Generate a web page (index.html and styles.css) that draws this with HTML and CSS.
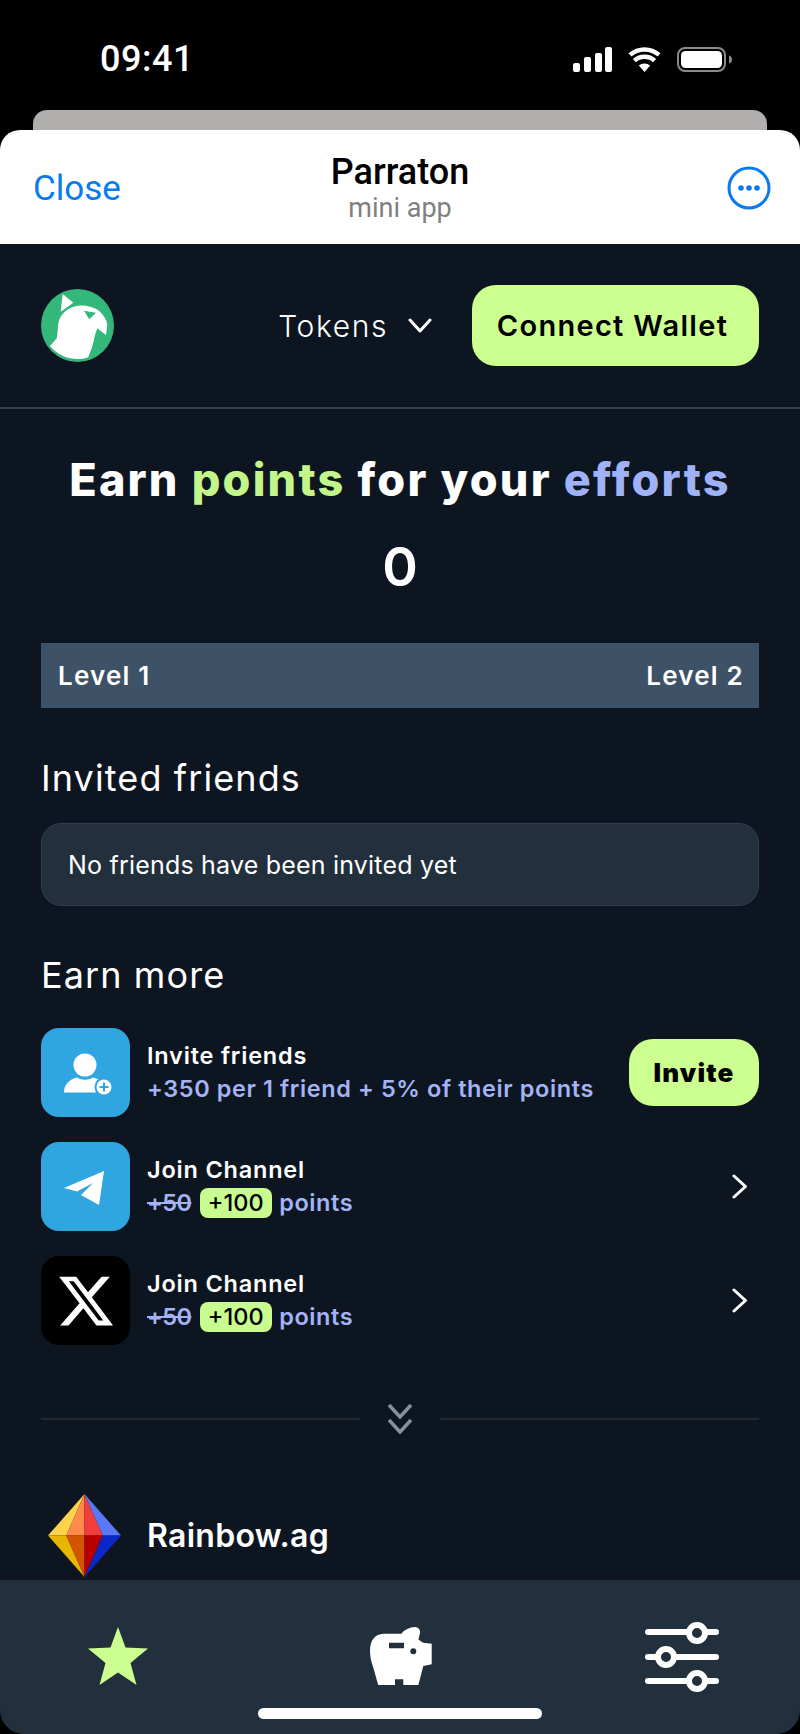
FILE: index.html
```html
<!DOCTYPE html>
<html lang="en">
<head>
  <meta charset="UTF-8">
  <meta name="viewport" content="width=device-width, initial-scale=1.0">
  <title>Parraton</title>
  <link rel="stylesheet" href="styles.css">
</head>
<body>
  <div class="phone">
    <div class="status-bar">
      <span class="time">09:41</span>
      <div class="status-icons">
        <svg class="signal" width="39" height="25" viewBox="0 0 39 25"><rect x="0" y="16" width="7" height="9" rx="2"/><rect x="11" y="10" width="7" height="15" rx="2"/><rect x="22" y="6" width="7" height="19" rx="2"/><rect x="32" y="0" width="7" height="25" rx="2"/></svg>
        <svg class="wifi" width="33" height="25" viewBox="0 0 33 25"><path d="M16.500 25L10.800 18.600a8.500 8.500 0 0 1 11.400 0z" fill="#fff"/><path d="M6.400 13.600a15 15 0 0 1 20.200 0M2 7.900a22 22 0 0 1 29 0" fill="none" stroke="#fff" stroke-width="4.500"/></svg>
        <svg class="battery" width="56" height="25" viewBox="0 0 56 25"><rect x="1" y="1" width="47" height="23" rx="7" fill="none" stroke="#8a8a8a" stroke-width="2"/><rect x="4" y="4" width="41" height="17" rx="4.500" fill="#fff"/><path d="M52 8.500c2 .5 3 2 3 4s-1 3.500-3 4z" fill="#8a8a8a"/></svg>
      </div>
    </div>
    <div class="peek"></div>

    <header class="sheet-head">
      <a class="close">Close</a>
      <div class="sheet-title">
        <strong>Parraton</strong>
        <span>mini app</span>
      </div>
      <svg class="more" width="44" height="44" viewBox="0 0 44 44"><circle cx="22" cy="22" r="20" fill="none" stroke="#0a7aee" stroke-width="3"/><circle cx="14" cy="22" r="2.800" fill="#0a7aee"/><circle cx="22" cy="22" r="2.800" fill="#0a7aee"/><circle cx="30" cy="22" r="2.800" fill="#0a7aee"/></svg>
    </header>

    <main class="app">
      <div class="topbar">
        <svg class="logo" width="73" height="73" viewBox="0 0 73 73">
          <circle cx="36.500" cy="36.500" r="36.500" fill="#34b77a"/>
          <path d="M21.700 5L19.700 22.700L32.300 13.700Z" fill="#fff"/>
          <path d="M22.300 24.300C28 18 38 15.500 45.700 17C52 18 56 20 59 22.700C63 27 66 31 66.300 36L65 46L56.300 39.300L54 46C53 51 52 55 50.700 59.300L47.300 68.300C41 70.500 35 70.500 29 69.300C21 67.500 14 63 9 57L15.700 49.300C17 44 16.500 39 17.300 34.300C18 30 20 27 22.300 24.300Z" fill="#fff"/>
          <path d="M43 21.700L55 23.700L48.300 30.300Z" fill="#34b77a"/>
        </svg>
        <div class="topbar-right">
          <div class="tokens">
            <span>Tokens</span>
            <svg width="24" height="15" viewBox="0 0 24 15"><path d="M2 2L12 13L22 2" fill="none" stroke="#fff" stroke-width="3" stroke-linecap="round" stroke-linejoin="round"/></svg>
          </div>
          <button class="connect">Connect Wallet</button>
        </div>
      </div>

      <div class="content">
        <h1 class="headline">Earn <span class="green">points</span> for your <span class="violet">efforts</span></h1>
        <div class="score">0</div>
        <div class="level-bar">
          <span>Level 1</span>
          <span>Level 2</span>
        </div>

        <h2 class="section-title friends-title">Invited friends</h2>
        <div class="empty-card">No friends have been invited yet</div>

        <h2 class="section-title earn-title">Earn more</h2>
        <ul class="tasks">
          <li class="task">
            <div class="task-icon blue">
              <svg width="89" height="89" viewBox="0 0 89 89">
                <circle cx="44" cy="37" r="11.500" fill="#fff"/>
                <path d="M23 64.500C23 56 29 51 36 49.500C41 52.500 47 52.500 52 49.500C57 50.500 61 53 63 57L55 64.500Z" fill="#fff"/>
                <circle cx="63" cy="59" r="9.500" fill="#2fa6e0"/>
                <circle cx="63" cy="59" r="7.500" fill="#fff"/>
                <path d="M63 54.500V63.500M58.500 59H67.500" stroke="#2fa6e0" stroke-width="2"/>
              </svg>
            </div>
            <div class="task-text">
              <div class="task-title">Invite friends</div>
              <div class="task-sub">+350 per 1 friend + 5% of their points</div>
            </div>
            <button class="invite">Invite</button>
          </li>
          <li class="task">
            <div class="task-icon blue">
              <svg width="89" height="89" viewBox="0 0 89 89"><path d="M23 46L63 29L58 63L40 53L52 41L36 49.500Z" fill="#fff"/></svg>
            </div>
            <div class="task-text">
              <div class="task-title">Join Channel</div>
              <div class="task-sub"><s>+50</s> <span class="badge">+100</span> points</div>
            </div>
            <svg class="arrow" width="16" height="25" viewBox="0 0 16 25"><path d="M2 2L13.500 12.500L2 23" fill="none" stroke="#fff" stroke-width="3" stroke-linecap="round" stroke-linejoin="round"/></svg>
          </li>
          <li class="task">
            <div class="task-icon black">
              <svg width="60" height="60" viewBox="0 0 24 24"><path fill="#fff" d="M18.244 2.250h3.308l-7.227 8.260 8.502 11.240H16.170l-5.214-6.817L4.990 21.750H1.680l7.730-8.835L1.254 2.250H8.080l4.713 6.231zm-1.161 17.520h1.833L7.084 4.126H5.117z"/></svg>
            </div>
            <div class="task-text">
              <div class="task-title">Join Channel</div>
              <div class="task-sub"><s>+50</s> <span class="badge">+100</span> points</div>
            </div>
            <svg class="arrow" width="16" height="25" viewBox="0 0 16 25"><path d="M2 2L13.500 12.500L2 23" fill="none" stroke="#fff" stroke-width="3" stroke-linecap="round" stroke-linejoin="round"/></svg>
          </li>
        </ul>

        <div class="more-divider">
          <svg width="26" height="31" viewBox="0 0 26 31"><path d="M2 2L13 14L24 2M2 17L13 29L24 17" fill="none" stroke="#8a9099" stroke-width="3.500"/></svg>
        </div>

        <div class="partner">
          <svg width="73" height="83" viewBox="0 0 73 83">
            <path d="M36.500 0L0 41.500H18.300Z" fill="#ffd24d"/>
            <path d="M36.500 0L18.300 41.500H36.500Z" fill="#ff8a4a"/>
            <path d="M36.500 0V41.500H54.800Z" fill="#f23d3d"/>
            <path d="M36.500 0L54.800 41.500H73Z" fill="#5a78f5"/>
            <path d="M36.500 83L0 41.500H18.300Z" fill="#e8b500"/>
            <path d="M36.500 83L18.300 41.500H36.500Z" fill="#d45500"/>
            <path d="M36.500 83V41.500H54.800Z" fill="#b80000"/>
            <path d="M36.500 83L54.800 41.500H73Z" fill="#0a28c8"/>
          </svg>
          <span>Rainbow.ag</span>
        </div>
      </div>
    </main>

    <nav class="tabbar">
      <div class="tabs">
        <svg width="62" height="58" viewBox="0 0 62 58"><path d="M31 0L38.500 20.500L61 21.500L43.500 36L49.500 58L31 45.500L12.500 58L18.500 36L1 21.500L23.500 20.500Z" fill="#ccff90"/></svg>
        <svg class="pig" width="62" height="58" viewBox="30 26 62 58"><path fill-rule="evenodd" fill="#fff" d="M30 50C30 39 35 33 43.500 32.700H61.500C64 29 70 26 75 26C79 26.500 80.500 29 80 32C79.500 35 79 36.500 78.300 38.300C80 39.500 81.500 41 83.300 41.700L91.700 42.700V63.300L83.300 65L78.300 84.300H63.300V78.300H55V84.300H38.300L33.300 66.700C31 60 30 55 30 50ZM49 41.700V47.300H64V41.700ZM73.300 47.300A3 3 0 1 0 73.300 53.300A3 3 0 1 0 73.300 47.300Z"/></svg>
        <svg class="sliders" width="74" height="70" viewBox="0 0 74 70">
          <g fill="none" stroke="#fff" stroke-width="6" stroke-linecap="round">
            <path d="M3 10H71M3 35H71M3 59H71"/>
          </g>
          <g fill="#222f3d" stroke="#fff" stroke-width="6">
            <circle cx="52" cy="11" r="8"/>
            <circle cx="21" cy="35" r="8"/>
            <circle cx="52" cy="59" r="8"/>
          </g>
        </svg>
      </div>
      <div class="home-bar"></div>
    </nav>
  </div>
</body>
</html>
```

FILE: styles.css
```css
* {
  box-sizing: border-box;
}
body {
  margin: 0;
  background-color: #000;
  font-family: Inter, "Liberation Sans", sans-serif;
  color: #fff;
}
.phone {
  width: 800px;
  height: 1734px;
  display: flex;
  flex-direction: column;
  overflow: hidden;
  background-color: #000;
}
.status-bar {
  height: 110px;
  padding: 47px 67px 0 100px;
  display: flex;
  justify-content: space-between;
  align-items: flex-start;
  flex: none;
}
.time {
  font-family: Roboto, "Liberation Sans", sans-serif;
  font-size: 36px;
  font-weight: 500;
  line-height: 25px;
  letter-spacing: 0.5px;
}
.status-icons {
  display: flex;
  align-items: center;
  gap: 16px;
}
.signal {
  fill: #fff;
}
.peek {
  height: 20px;
  margin: 0 33px;
  background-color: #b0afad;
  border-radius: 14px 14px 0 0;
  flex: none;
}
.sheet-head {
  height: 114px;
  padding: 0 29px 0 33px;
  background-color: #fff;
  border-radius: 20px 20px 0 0;
  display: flex;
  align-items: center;
  justify-content: space-between;
  position: relative;
  flex: none;
}
.close {
  font-family: Roboto, "Liberation Sans", sans-serif;
  font-size: 35px;
  color: #0a7aee;
  margin-top: 2px;
}
.sheet-title {
  position: absolute;
  left: 0;
  right: 0;
  top: 21px;
  text-align: center;
  font-family: Roboto, "Liberation Sans", sans-serif;
}
.sheet-title strong {
  display: block;
  font-size: 36px;
  line-height: 42px;
  font-weight: 500;
  color: #000;
}
.sheet-title span {
  display: block;
  font-size: 27px;
  line-height: 30px;
  color: #808080;
}
.more {
  margin-top: 2px;
}
.app {
  flex: 1;
  min-height: 0;
  overflow: hidden;
  background-color: #0d1620;
}
.topbar {
  height: 165px;
  padding: 41px 41px 0;
  border-bottom: 2px solid #383d46;
  display: flex;
  justify-content: space-between;
  align-items: flex-start;
}
.logo {
  margin-top: 4px;
}
.topbar-right {
  display: flex;
  align-items: center;
}
.tokens {
  display: flex;
  align-items: center;
  gap: 20px;
  margin-right: 40px;
  font-size: 30px;
  font-weight: 300;
  letter-spacing: 1.6px;
}
.connect {
  width: 287px;
  height: 81px;
  padding: 0 6px 0 0;
  border: 0;
  border-radius: 24px;
  background-color: #ccff90;
  color: #000;
  font-family: inherit;
  font-size: 29px;
  font-weight: 600;
  letter-spacing: 1.3px;
}
.content {
  padding: 0 41px;
}
.headline {
  margin: 43px 0 0;
  text-align: center;
  font-size: 45px;
  line-height: 56px;
  font-weight: 800;
  letter-spacing: 2.2px;
  white-space: nowrap;
}
.green {
  color: #c3f58a;
}
.violet {
  color: #9fb2f7;
}
.score {
  margin-top: 26px;
  text-align: center;
  font-size: 54px;
  line-height: 66px;
  font-weight: 600;
}
.level-bar {
  margin-top: 43px;
  height: 65px;
  padding: 0 15px 0 17px;
  background-color: #3d5266;
  display: flex;
  justify-content: space-between;
  align-items: center;
  font-size: 26px;
  font-weight: 600;
  letter-spacing: 1.2px;
}
.section-title {
  margin: 0;
  font-size: 36px;
  line-height: 42px;
  font-weight: 400;
  letter-spacing: 1.1px;
}
.friends-title {
  margin-top: 49px;
}
.empty-card {
  margin-top: 24px;
  height: 83px;
  padding: 0 26px;
  background-color: #222f3d;
  border: 1px solid #343c46;
  border-radius: 20px;
  display: flex;
  align-items: center;
  font-size: 25px;
  letter-spacing: 0.2px;
}
.earn-title {
  margin-top: 48px;
}
.tasks {
  list-style: none;
  margin: 32px 0 0;
  padding: 0;
  display: flex;
  flex-direction: column;
  gap: 25px;
}
.task {
  height: 89px;
  display: flex;
  align-items: center;
}
.task-icon {
  width: 89px;
  height: 89px;
  border-radius: 18px;
  display: flex;
  align-items: center;
  justify-content: center;
  flex: none;
}
.blue {
  background-color: #2fa6e0;
}
.black {
  background-color: #000;
}
.task-text {
  margin-left: 17px;
  flex: 1;
  min-width: 0;
}
.task-title {
  font-size: 23.5px;
  line-height: 32px;
  font-weight: 600;
  letter-spacing: 0.8px;
}
.task-sub {
  font-size: 23.5px;
  line-height: 33px;
  font-weight: 600;
  letter-spacing: 0.6px;
  color: #a3b3f5;
  white-space: nowrap;
}
.task-sub s {
  letter-spacing: -0.6px;
  margin-right: 2px;
}
.badge {
  display: inline-block;
  padding: 0 8px;
  margin-right: 1px;
  line-height: 30px;
  border-radius: 8px;
  background-color: #c8fc8e;
  color: #000;
  font-weight: 500;
  letter-spacing: 0;
}
.invite {
  width: 130px;
  height: 67px;
  border: 0;
  border-radius: 24px;
  background-color: #ccff90;
  color: #000;
  font-family: inherit;
  font-size: 26px;
  font-weight: 900;
  letter-spacing: 1.2px;
  flex: none;
}
.arrow {
  margin-right: 11px;
  flex: none;
}
.more-divider {
  margin-top: 58px;
  display: flex;
  align-items: center;
  gap: 27px;
}
.more-divider::before,
.more-divider::after {
  content: "";
  flex: 1;
  height: 2px;
  background-color: #23272e;
}
.partner {
  margin-top: 60px;
  padding-left: 7px;
  display: flex;
  align-items: center;
  gap: 26px;
  font-size: 32px;
  font-weight: 600;
  letter-spacing: 0.3px;
}
.tabbar {
  height: 154px;
  background-color: #222f3d;
  border-radius: 0 0 24px 24px;
  flex: none;
  position: relative;
}
.tabs {
  padding: 47px 81px 0 87px;
  display: flex;
  justify-content: space-between;
  align-items: flex-start;
}
.pig {
  margin-left: 8px;
}
.sliders {
  margin-top: -5px;
}
.home-bar {
  position: absolute;
  left: 258px;
  bottom: 15px;
  width: 284px;
  height: 11px;
  border-radius: 6px;
  background-color: #fff;
}
```
